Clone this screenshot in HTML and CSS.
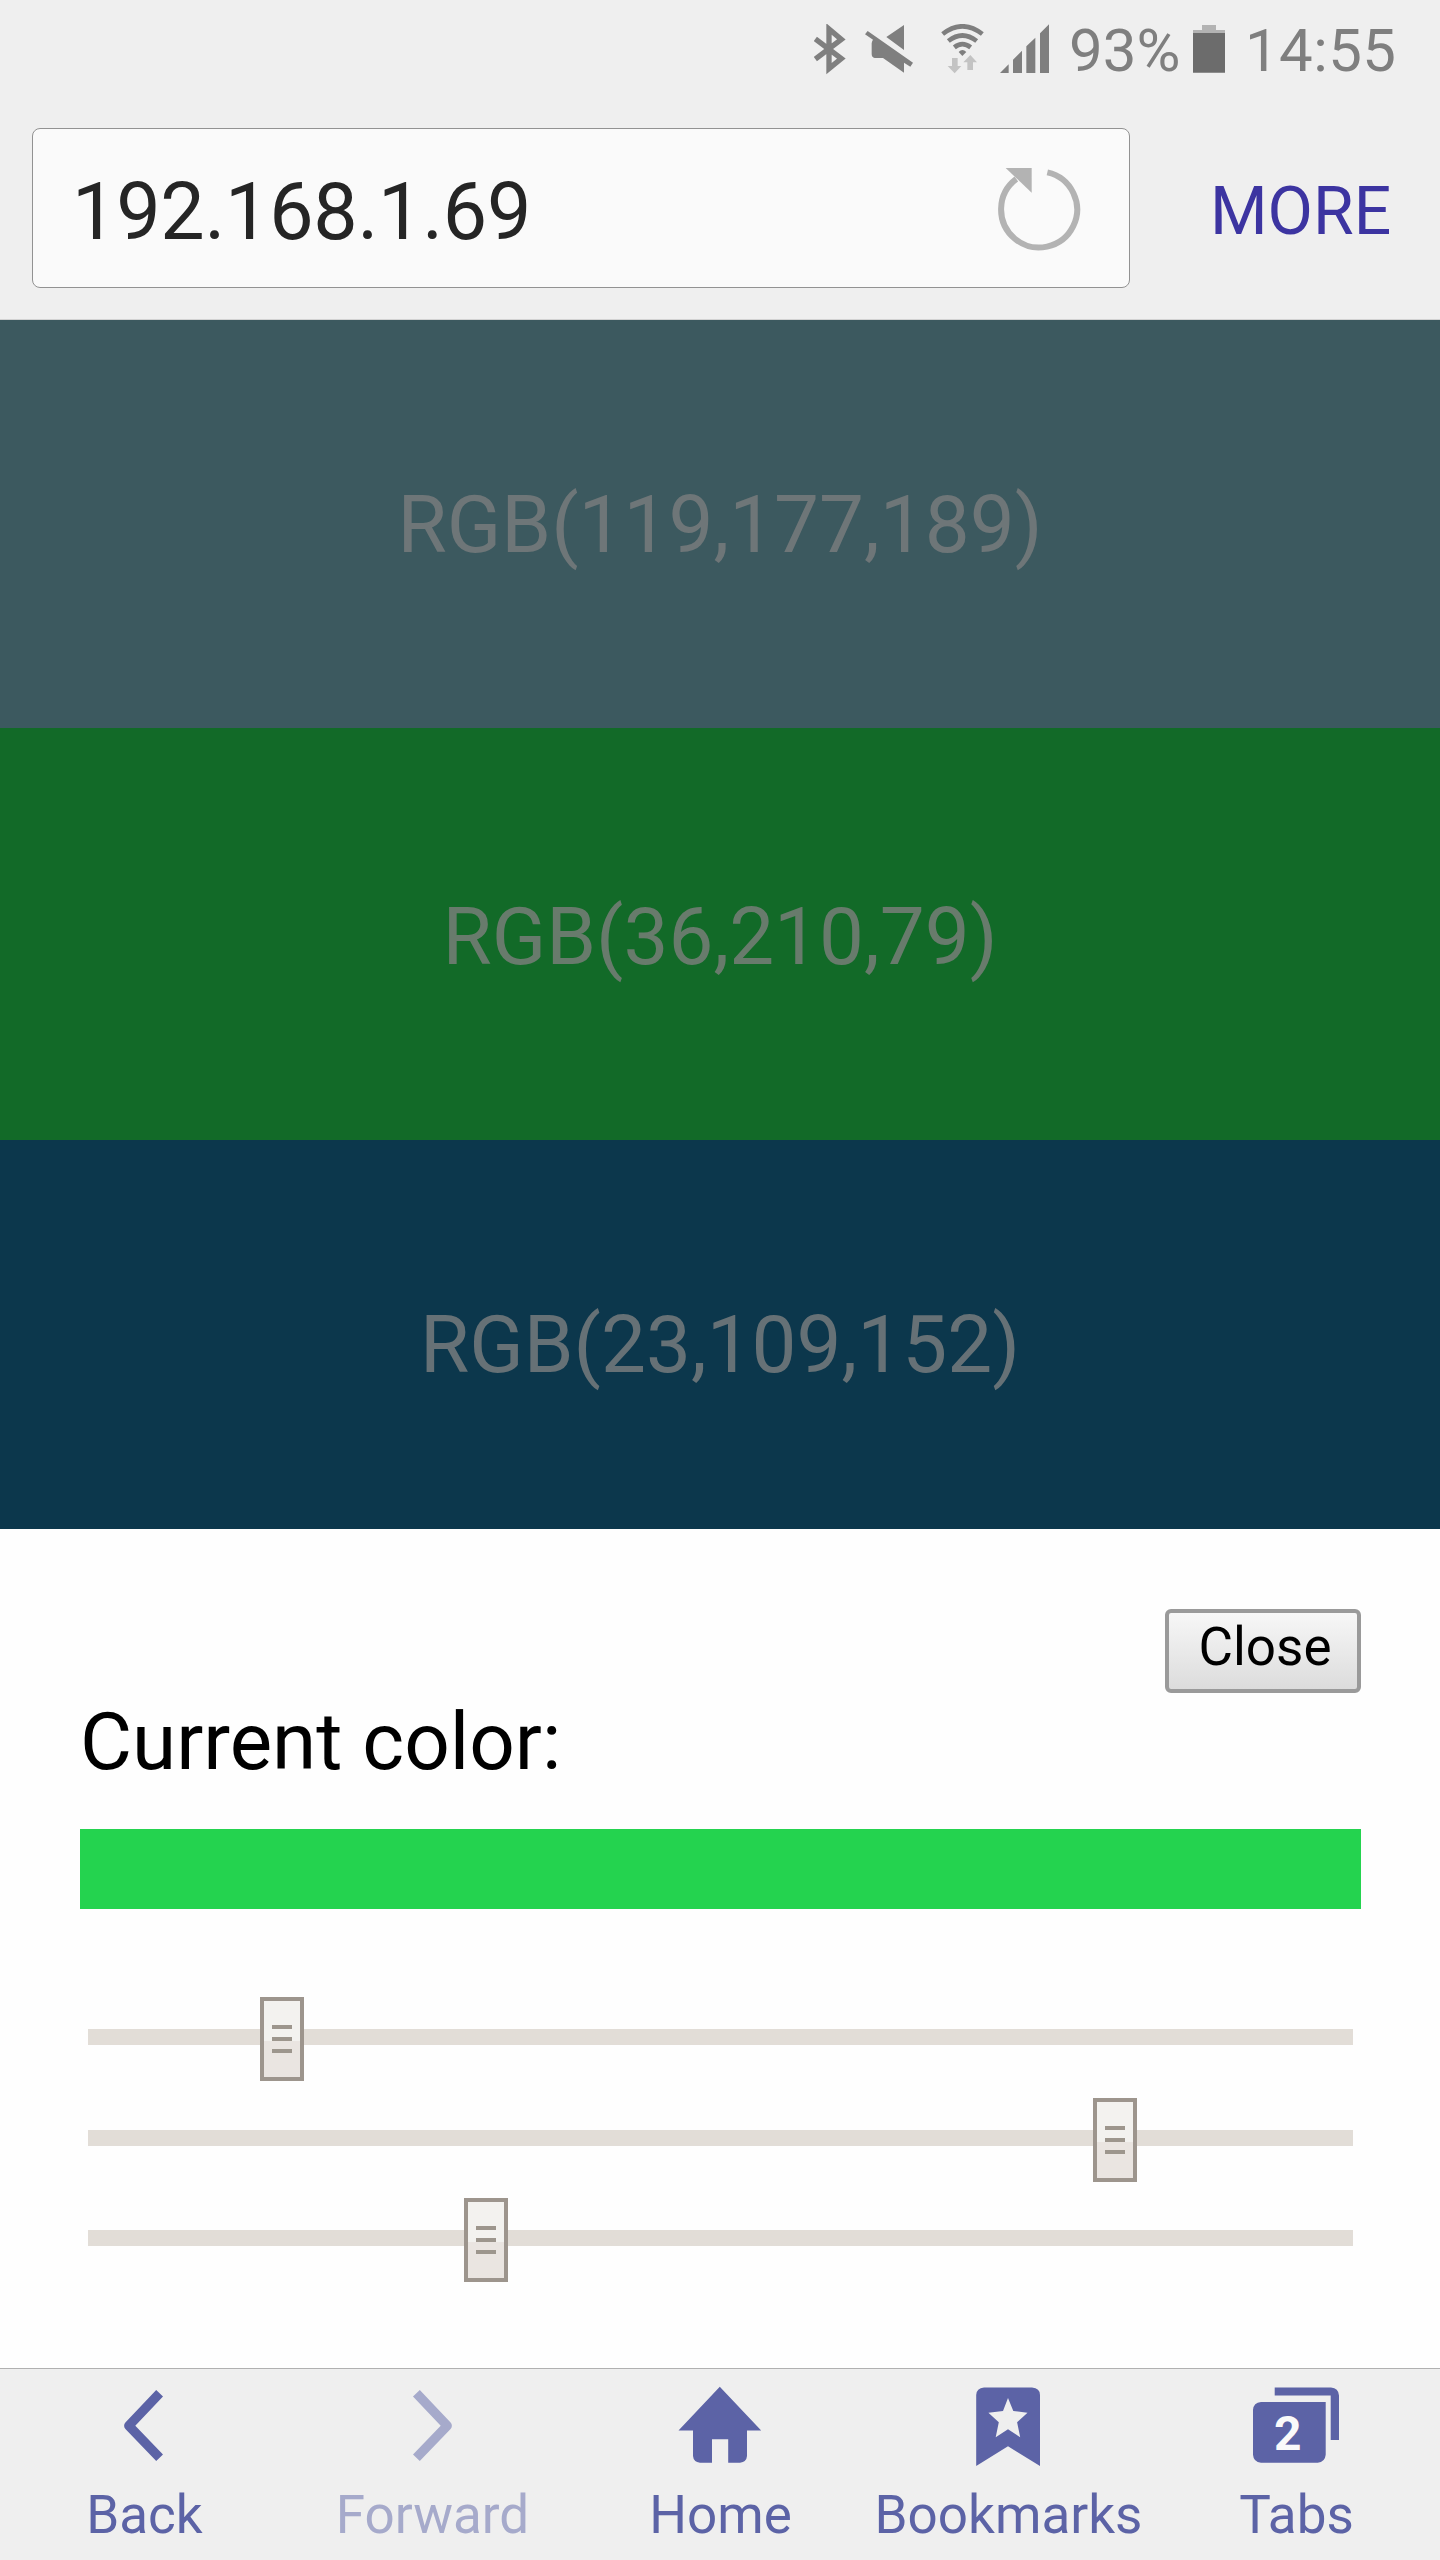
FILE: index.html
```html
<!DOCTYPE html>
<html lang="en">
<head>
<meta charset="utf-8">
<title>192.168.1.69</title>
<link rel="stylesheet" href="styles.css">
</head>
<body>
<header class="status">
  <svg class="bluetooth" viewBox="42 72 96 162" width="32" height="54" fill="none" stroke="#7f7f7f" stroke-width="14"><path d="M46 117L124 176L87 206V87L124 118L46 177" stroke-miterlimit="10" stroke-width="16"/></svg>
  <svg class="mute" viewBox="195 72 144 162" width="48" height="54" fill="#7f7f7f"><path d="M312 75V150L259 111ZM203 93L339 188L331 200L312 188V218L249 174H224Q215 172 215 162V130Q216 122 219 119L195 103Z"/></svg>
  <svg class="wifi" viewBox="423 72 129 162" width="43" height="54"><g fill="none" stroke="#7f7f7f" stroke-width="14"><path d="M428 102Q487 56 547 102"/><path d="M445 123Q487 90 530 123"/><path d="M463 142Q487 123 512 142"/></g><path d="M476 156Q487 144 499 156L487 168Z" fill="#7f7f7f"/><path d="M456 174H473V198H484L464 220L443 198H456ZM511 165L531 187H519V210H502V187H490Z" fill="#c3c3c3"/></svg>
  <svg class="signal" viewBox="600 72 147 162" width="49" height="54" fill="#7f7f7f"><path d="M600 219L626 193V219ZM639 219V179L666 152V219ZM679 219V139L706 113V219ZM720 219V100L747 73V219Z"/></svg>
  <span class="percent">93%</span>
  <svg class="battery" viewBox="0 0 32 54" width="32" height="54"><path d="M9 1H23V6H32V9H0V6H9Z" fill="#b3b3b3"/><path d="M0 9H32V48.700H0Z" fill="#6c6c6c"/></svg>
  <span class="time">14:55</span>
</header>
<div class="toolbar">
  <div class="address">
    <span class="url">192.168.1.69</span>
    <svg class="reload" viewBox="111 171 252 252" width="84" height="84"><path d="M262 187A114 114 0 1 1 169 207" fill="none" stroke="#b3b3b3" stroke-width="18"/><path d="M137 174H215V248Z" fill="#b3b3b3"/></svg>
  </div>
  <span class="more">MORE</span>
</div>
<main class="page">
  <div class="band band-teal">RGB(119,177,189)</div>
  <div class="band band-green">RGB(36,210,79)</div>
  <div class="band band-blue">RGB(23,109,152)</div>
  <section class="panel">
    <button class="close">Close</button>
    <div class="label">Current color:</div>
    <div class="swatch"></div>
    <div class="sliders">
      <div class="slider"><div class="thumb" style="margin-left:172px"><i></i><i></i><i></i></div></div>
      <div class="slider second"><div class="thumb" style="margin-left:1005px"><i></i><i></i><i></i></div></div>
      <div class="slider third"><div class="thumb" style="margin-left:376px"><i></i><i></i><i></i></div></div>
    </div>
  </section>
</main>
<nav class="nav">
  <a class="item"><svg viewBox="96 2384 96 84" width="96" height="84"><path d="M159.600 2393.300L128.800 2425.700L159.600 2457.700" fill="none" stroke="#5c63a6" stroke-width="9.400" stroke-linejoin="round"/></svg><span>Back</span></a>
  <a class="item disabled"><svg viewBox="384 2384 96 84" width="96" height="84"><path d="M416.400 2393.300L447.200 2425.700L416.400 2457.700" fill="none" stroke="#a6aacb" stroke-width="9.400" stroke-linejoin="round"/></svg><span>Forward</span></a>
  <a class="item"><svg viewBox="672 2384 96 84" width="96" height="84"><path d="M719.800 2386.700L761.200 2430.500H747V2456Q746.500 2462 740 2462.700H728.200V2439.300H712V2462.700H700Q693.500 2462 693 2456V2430.500H678.500Z" fill="#5c63a6"/></svg><span>Home</span></a>
  <a class="item"><svg viewBox="960 2384 96 84" width="96" height="84"><path d="M984 2387.500H1032Q1040 2388 1040 2395V2466L1008 2446.300L976.200 2466V2395Q976.500 2388 984 2387.500ZM1008 2398L1003 2411L988.400 2412.700L998.800 2422.300L995.700 2437.300L1008 2429.300L1020.200 2437.300L1017.100 2422.300L1027.500 2412.700L1013.300 2411Z" fill="#5c63a6" fill-rule="evenodd"/></svg><span>Bookmarks</span></a>
  <a class="item"><svg viewBox="1248 2384 96 84" width="96" height="84"><path d="M1261 2402H1325.700V2454.700Q1325 2462 1317.700 2462.700H1261Q1253.500 2462 1253 2454.700V2410Q1253.500 2402.500 1261 2402ZM1274.700 2387.500H1331Q1338.500 2388 1339 2395.500V2440H1330.700V2395.500H1274.700Z" fill="#5c63a6"/><text class="tab-count" x="1287.700" y="2450" text-anchor="middle">2</text></svg><span>Tabs</span></a>
</nav>
</body>
</html>
```
FILE: styles.css
```css
* { box-sizing: border-box; }
body {
  margin: 0;
  width: 1440px;
  height: 2560px;
  display: flex;
  flex-direction: column;
  background: #efefef;
  font-family: Roboto, sans-serif;
  overflow: hidden;
}
svg { display: block; flex: none; }

.status {
  flex: none;
  height: 102px;
  padding-left: 814px;
  display: flex;
  align-items: center;
  font-size: 60px;
  line-height: 60px;
  color: #7f7f7f;
  white-space: nowrap;
}
.mute { margin-left: 19px; }
.wifi { margin-left: 28px; }
.signal { margin-left: 16px; }
.percent { margin-left: 20px; width: 124px; }
.time { margin-left: 20px; letter-spacing: 0.4px; }

.toolbar {
  flex: none;
  height: 218px;
  padding: 26px 0 0 32px;
  display: flex;
  align-items: flex-start;
  border-bottom: 1px solid #d2d2d2;
}
.address {
  width: 1098px;
  height: 160px;
  padding: 0 48px 0 39px;
  display: flex;
  align-items: center;
  justify-content: space-between;
  border: 1px solid #929292;
  border-radius: 8px;
  background: #fafafa;
}
.url {
  padding-top: 8px;
  font-size: 79px;
  letter-spacing: -0.25px;
  color: #252525;
}
.reload { margin-top: 2px; }
.more {
  margin-left: 80px;
  padding-top: 7px;
  font-size: 66px;
  line-height: 153px;
  color: #3c34a1;
}

.page {
  flex: none;
  height: 2048px;
  display: flex;
  flex-direction: column;
}
.band {
  flex: none;
  font-size: 80px;
  text-align: center;
}
.band-teal { height: 408px; line-height: 411px; background: #3c595f; color: #6e7678; }
.band-green { height: 412px; line-height: 418px; background: #126a28; color: #687b6c; }
.band-blue { height: 389px; line-height: 410px; background: #0c374c; color: #667176; }

.panel {
  flex: 1;
  padding: 80px 79px 0 80px;
  display: flex;
  flex-direction: column;
  background: #fefefe;
}
.close {
  align-self: flex-end;
  width: 196px;
  height: 84px;
  padding: 0 0 9px 4px;
  border: 4px solid #9a9a9a;
  border-radius: 6px;
  background: linear-gradient(#f7f7f7, #dcdcdc);
  font: 53px/64px Roboto, sans-serif;
  color: #000;
}
.label {
  margin-top: 1px;
  font-size: 80px;
  line-height: 96px;
  color: #000;
}
.swatch {
  margin-top: 39px;
  height: 80px;
  background: #24d34f;
}
.sliders { padding: 88px 8px 0; }
.slider {
  height: 84px;
  background: linear-gradient(#e2ddd7, #e2ddd7) 0 32px / 100% 16px no-repeat;
}
.second { margin-top: 17px; }
.third { margin-top: 16px; }
.thumb {
  width: 44px;
  height: 84px;
  padding: 24px 8px 0;
  display: flex;
  flex-direction: column;
  gap: 8px;
  border: 4px solid #9d958d;
  background: linear-gradient(#f3f2ef 40px, #eae5e1 40px);
}
.thumb i { height: 4px; background: #9d968d; }

.nav {
  flex: none;
  height: 192px;
  padding-top: 15px;
  display: grid;
  grid-template-columns: repeat(5, 288px);
  border-top: 1px solid #b0b0b0;
  background: #efefef;
}
.item {
  display: flex;
  flex-direction: column;
  align-items: center;
  gap: 17px;
  font-size: 53px;
  line-height: 60px;
  color: #5c63a6;
}
.item span { padding-left: 1px; }
.disabled { color: #a6aacb; }
.tab-count { font-size: 48px; font-weight: 700; fill: #fafafa; }
```
